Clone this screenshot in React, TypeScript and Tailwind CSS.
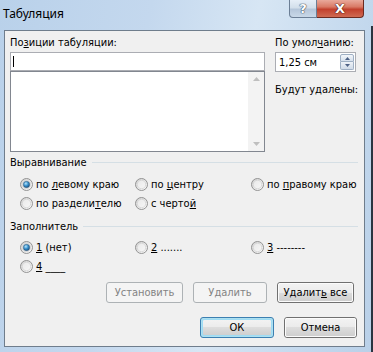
import React from "react";

function Acc({ children }: { children: React.ReactNode }) {
  return <span className="underline underline-offset-[1px] decoration-[1px]">{children}</span>;
}

function Radio({ checked }: { checked?: boolean }) {
  return (
    <svg width="13" height="13" viewBox="0 0 13 13" className="shrink-0">
      <defs>
        <linearGradient id="rbg" x1="0" y1="0" x2="1" y2="1">
          <stop offset="0" stopColor="#cfcfcf" />
          <stop offset="1" stopColor="#fdfdfd" />
        </linearGradient>
        <linearGradient id="rin" x1="0" y1="0" x2="1" y2="1">
          <stop offset="0" stopColor="#e9e9e9" />
          <stop offset="1" stopColor="#f7f7f7" />
        </linearGradient>
        <radialGradient id="rdot" cx="0.4" cy="0.35" r="0.75">
          <stop offset="0" stopColor="#b9e6fb" />
          <stop offset="0.45" stopColor="#3a93cf" />
          <stop offset="1" stopColor="#0b3f6d" />
        </radialGradient>
      </defs>
      <circle cx="6.5" cy="6.5" r="6" fill="url(#rbg)" stroke="#939393" />
      <circle cx="6.5" cy="6.5" r="4.2" fill="url(#rin)" stroke="#d4d4d4" strokeWidth="0.8" />
      {checked && <circle cx="6.5" cy="6.5" r="3.2" fill="url(#rdot)" stroke="#3b5a78" strokeWidth="0.5" />}
    </svg>
  );
}

function RadioItem({ checked, children }: { checked?: boolean; children: React.ReactNode }) {
  return (
    <div className="flex items-center gap-[3px] h-[19px]">
      <Radio checked={checked} />
      <span className="whitespace-pre">{children}</span>
    </div>
  );
}

function Btn({
  children,
  disabled,
  def,
  w,
}: {
  children: React.ReactNode;
  disabled?: boolean;
  def?: boolean;
  w: string;
}) {
  if (disabled) {
    return (
      <div
        className={`${w} h-[21px] rounded-[3px] border border-[#adb2b5] bg-[#f4f4f4] text-[#838383] flex items-center justify-center`}
      >
        <span className="whitespace-pre">{children}</span>
      </div>
    );
  }
  if (def) {
    return (
      <div className={`${w} h-[21px] rounded-[3px] border border-[#3c7fb1] p-[1px] bg-[#48c8f0]/40`}>
        <div className="w-full h-full rounded-[2px] bg-[linear-gradient(180deg,#f2f2f2_0%,#ebebeb_50%,#dddddd_50%,#cfcfcf_100%)] border border-[#9fdcf4] flex items-center justify-center text-black">
          <span className="whitespace-pre">{children}</span>
        </div>
      </div>
    );
  }
  return (
    <div className={`${w} h-[21px] rounded-[3px] border border-[#707070]`}>
      <div className="w-full h-full rounded-[2px] border border-[#fbfbfb] bg-[linear-gradient(180deg,#f2f2f2_0%,#ebebeb_50%,#dddddd_50%,#cfcfcf_100%)] flex items-center justify-center text-black">
        <span className="whitespace-pre">{children}</span>
      </div>
    </div>
  );
}

function SectionTitle({ children }: { children: React.ReactNode }) {
  return (
    <div className="flex items-center gap-[5px] h-[13px]">
      <span className="whitespace-nowrap">{children}</span>
      <div className="flex-1 h-px bg-[#d5dfe5]" />
    </div>
  );
}

export default function App() {
  return (
    <div className="w-[373px] h-[352px] overflow-hidden bg-[linear-gradient(100deg,#b9d1ea_0%,#c4d8ee_35%,#d7e6f4_60%,#c3d8ed_85%,#b9d0e8_100%)] flex flex-col relative font-['DejaVu_Sans_Condensed','DejaVu_Sans',sans-serif] text-[11px] leading-[13px] text-black">
      <div className="absolute right-0 top-[26px] w-[2px] h-[326px] bg-[#2a3440]" />
      {/* Title bar */}
      <div className="h-[30px] flex items-start justify-between shrink-0">
        <div className="pl-[3px] pt-[6px] text-[12px] leading-[16px] font-['Noto_Sans','Open_Sans',sans-serif] text-black">
          Табуляция
        </div>
        <div className="flex mr-[9px]">
          <div className="w-[28px] h-[18px] rounded-bl-[4px] border border-t-0 border-[#6b7e95] bg-[linear-gradient(180deg,#e6eef7_0%,#d3dfeb_45%,#b5c6da_55%,#c9d8e8_100%)] flex items-center justify-center">
            <span className="text-[13px] leading-[13px] font-bold font-['DejaVu_Sans',sans-serif] text-white [text-shadow:0_0_1px_#3b4a5c,0_0_1px_#3b4a5c,0_0_1px_#3b4a5c]">
              ?
            </span>
          </div>
          <div className="w-[47px] h-[18px] rounded-br-[4px] border border-t-0 border-l-0 border-[#6b2a20] bg-[linear-gradient(180deg,#e9a99b_0%,#d97a66_40%,#c2402d_55%,#cf6a52_100%)] flex items-center justify-center">
            <span className="text-[13px] leading-[13px] font-bold font-['DejaVu_Sans',sans-serif] text-white [text-shadow:0_0_1px_#4a1a10,0_0_1px_#4a1a10,0_0_1px_#4a1a10]">
              X
            </span>
          </div>
        </div>
      </div>

      {/* Client area */}
      <div className="ml-[4px] w-[361px] h-[317px] border border-[#6f7d8c] bg-[#f0f0f0] flex flex-col">
        {/* top part */}
        <div className="flex pl-[5px] pt-[5px] gap-[10px]">
          <div className="w-[255px] flex flex-col">
            <div>
              По<Acc>з</Acc>иции табуляции:
            </div>
            <div className="mt-[3px] h-[19px] border border-[#abadb3] bg-white flex items-center pl-[2px]">
              <div className="w-px h-[11px] bg-black" />
            </div>
            <div className="h-[81px] border border-[#828790] bg-white flex justify-end">
              <div className="w-[16px] h-full bg-[#f3f3f3] flex flex-col items-center justify-between py-[5px]">
                <svg width="7" height="4" viewBox="0 0 7 4">
                  <path d="M0 4 L3.5 0 L7 4 Z" fill="#bfbfbf" />
                </svg>
                <svg width="7" height="4" viewBox="0 0 7 4">
                  <path d="M0 0 L3.5 4 L7 0 Z" fill="#bfbfbf" />
                </svg>
              </div>
            </div>
          </div>
          <div className="w-[81px] flex flex-col">
            <div className="whitespace-nowrap">
              По умол<Acc>ч</Acc>анию:
            </div>
            <div className="mt-[3px] h-[20px] border border-[#abadb3] bg-white flex items-center justify-between pl-[3px] pr-[1px]">
              <span>1,25 см</span>
              <div className="flex flex-col h-[16px] w-[14px]">
                <div className="h-[8px] border border-[#9fb0c4] rounded-t-[2px] bg-[linear-gradient(180deg,#f3f6fa,#d6e0ec)] flex items-center justify-center">
                  <svg width="5" height="3" viewBox="0 0 5 3">
                    <path d="M0 3 L2.5 0 L5 3 Z" fill="#4d6185" />
                  </svg>
                </div>
                <div className="h-[8px] border border-t-0 border-[#9fb0c4] rounded-b-[2px] bg-[linear-gradient(180deg,#eef2f7,#d0dbe8)] flex items-center justify-center">
                  <svg width="5" height="3" viewBox="0 0 5 3">
                    <path d="M0 0 L2.5 3 L5 0 Z" fill="#4d6185" />
                  </svg>
                </div>
              </div>
            </div>
            <div className="mt-[11px] whitespace-nowrap">Будут удалены:</div>
          </div>
        </div>

        {/* Alignment */}
        <div className="pl-[5px] pr-[6px] mt-[4px]">
          <SectionTitle>Выравнивание</SectionTitle>
        </div>
        <div className="pl-[15px] mt-[6px] grid grid-cols-[115px_116px_1fr]">
          <RadioItem checked>
            по <Acc>л</Acc>евому краю
          </RadioItem>
          <RadioItem>
            по <Acc>ц</Acc>ентру
          </RadioItem>
          <RadioItem>
            по <Acc>п</Acc>равому краю
          </RadioItem>
          <RadioItem>
            по раздели<Acc>т</Acc>елю
          </RadioItem>
          <RadioItem>
            с черто<Acc>й</Acc>
          </RadioItem>
        </div>

        {/* Leader */}
        <div className="pl-[5px] pr-[6px] mt-[7px]">
          <SectionTitle>Заполнитель</SectionTitle>
        </div>
        <div className="pl-[15px] mt-[5px] grid grid-cols-[115px_116px_1fr]">
          <RadioItem checked>
            <Acc>1</Acc> (нет)
          </RadioItem>
          <RadioItem>
            <Acc>2</Acc> .......
          </RadioItem>
          <RadioItem>
            <Acc>3</Acc> --------
          </RadioItem>
          <RadioItem>
            <Acc>4</Acc> ____
          </RadioItem>
        </div>

        {/* Buttons */}
        <div className="mt-[6px] flex justify-end gap-[10px] pr-[10px]">
          <Btn disabled w="w-[77px]">Установить</Btn>
          <Btn disabled w="w-[74px]">Удалить</Btn>
          <Btn w="w-[77px]">
            Удалит<Acc>ь</Acc> все
          </Btn>
        </div>
        <div className="mt-[14px] flex justify-end gap-[10px] pr-[7px]">
          <Btn def w="w-[74px]">ОК</Btn>
          <Btn w="w-[73px]">Отмена</Btn>
        </div>
      </div>
    </div>
  );
}
